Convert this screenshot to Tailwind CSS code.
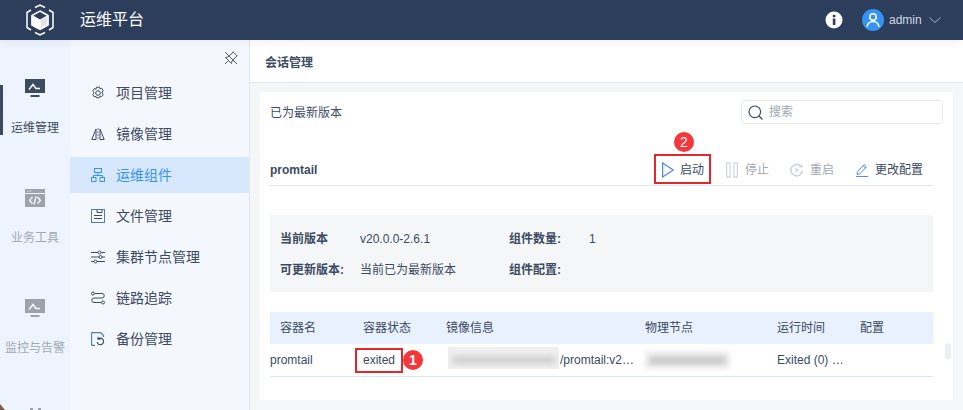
<!doctype html>
<html>
<head>
<meta charset="utf-8">
<script src="https://cdn.jsdelivr.net/npm/@tailwindcss/browser@4"></script>
</head>
<body class="m-0 overflow-hidden">
<div class="relative flex h-[410px] w-[963px] flex-col overflow-hidden bg-[#f5f6f8] font-['Liberation_Sans','Noto_Sans_CJK_SC',sans-serif] text-xs text-[#3c4a62]">
  <header class="relative z-10 flex h-10 shrink-0 items-center bg-[#2c3e5c] text-white shadow-[0_2px_8px_rgba(0,0,0,0.06)]">
    <svg class="ml-[26px] h-[32px] w-[28px]" viewBox="0 0 28 32" fill="none" stroke="#fff"><path d="M9 3.500 14 1l5 2.500M23 6l4 2.500v15L23 26M19 28.500 14 31l-5-2.500M5 26l-4-2.500v-15L5 6" stroke-width="1.500"/><path d="M14 7 22 11.500v9.500L14 25.500 6 21v-9.500Z" stroke-width="1.500"/><path d="M6 11.500 14 16v9.500L6 21Z" fill="#fff" stroke-width="1"/><path d="M14 16 22 11.500v9.500L14 25.500Z" fill="#fff" fill-opacity=".85" stroke-width="1"/></svg>
    <span class="ml-[26px] text-base">运维平台</span>
    <svg class="ml-[681px] h-[18px] w-[18px]" viewBox="0 0 18 18"><circle cx="9" cy="9" r="8.500" fill="#fff"/><rect x="7.800" y="7.500" width="2.600" height="6.500" fill="#2c3e5c"/><rect x="7.800" y="3.800" width="2.600" height="2.400" fill="#2c3e5c"/></svg>
    <svg class="ml-[19px] h-[22px] w-[22px]" viewBox="0 0 22 22" fill="none"><circle cx="11" cy="11" r="11" fill="#3593f5"/><circle cx="11" cy="8" r="3.200" stroke="#fff" stroke-width="1.500"/><path d="M5 18c.5-3.500 3-5.500 6-5.500s5.500 2 6 5.500" stroke="#fff" stroke-width="1.500"/></svg>
    <span class="ml-[5px] text-xs text-[#d3d9e2]">admin</span>
    <svg class="ml-[7px] h-2 w-3" viewBox="0 0 12 8" fill="none" stroke="#a8b2c2"><path d="m.5 1.500 5.500 5 5.500-5"/></svg>
  </header>
  <div class="flex min-h-0 flex-1">
    <nav class="relative flex w-[70px] shrink-0 flex-col items-center gap-[30px] overflow-hidden bg-[#eef4fe] pt-[39px] text-[#a1a8b4]">
      <div class="absolute left-0 top-[45px] h-[50px] w-[3px] bg-[#3c4a62]"></div>
      <a class="flex h-[80px] shrink-0 flex-col items-center text-[#3c4a62]">
        <svg class="h-[20px] w-5" viewBox="0 0 20 20"><rect width="20" height="14" fill="#3c4a62"/><path d="M4 10.500 8 5.500l3 4h4" fill="none" stroke="#fff" stroke-width="1.500"/><rect x="5.500" y="16" width="9" height="2" fill="#3c4a62"/></svg>
        <span class="mt-[21px] whitespace-nowrap">运维管理</span>
      </a>
      <a class="flex h-[80px] shrink-0 flex-col items-center">
        <svg class="h-[18px] w-5" viewBox="0 0 20 18"><rect width="20" height="4" fill="#9ca3af"/><path d="M2 2h5" stroke="#e4e8ef" stroke-dasharray="1 .6"/><rect y="5" width="20" height="13" fill="#9ca3af"/><path d="M7.500 8 4.500 11.500l3 3M12.500 8l3 3.500-3 3M11 7.500l-2 8" fill="none" stroke="#fff" stroke-width="1.300"/></svg>
        <span class="mt-[23px] whitespace-nowrap">业务工具</span>
      </a>
      <a class="flex h-[80px] shrink-0 flex-col items-center">
        <svg class="h-[20px] w-5" viewBox="0 0 20 20"><rect width="20" height="14" fill="#9ca3af"/><path d="M4 10.500 8 5.500l3 4h4" fill="none" stroke="#fff" stroke-width="1.500"/><rect x="5.500" y="16" width="9" height="2" fill="#9ca3af"/></svg>
        <span class="mt-[21px] whitespace-nowrap">监控与告警</span>
      </a>
      <svg class="-mt-[1px] h-[20px] w-[11px] shrink-0" viewBox="0 0 11 20"><rect width="3" height="20" fill="#9ca3af"/><rect x="8" width="3" height="20" fill="#9ca3af"/></svg>
      <svg class="absolute bottom-0 left-0 h-[6px] w-[5px]" viewBox="0 0 5 6"><path d="M0 0 5 6H0Z" fill="#7b5a4e"/></svg>
    </nav>
    <aside class="relative flex w-[180px] shrink-0 flex-col gap-[5px] border-r border-[#e3e7ee] bg-[#f4f7fe] pt-[35px] text-sm">
      <svg class="absolute right-[11px] top-[11px] h-[14px] w-[14px]" viewBox="0 0 14 14" fill="none" stroke="#3c4a62"><path d="M9 .8 13.200 5l-1.500 1L8 10l-.5 2.500L1.500 6.500 4 6l4-3.700ZM4.500 9.500 1 13M1 1l12 12" stroke-width=".9"/></svg>
      <a class="flex h-9 items-center pl-[21px]"><svg class="mr-[11px] h-[14px] w-[14px]" viewBox="0 0 14 14" fill="none" stroke="#3c4a62"><path d="M5.500.7h3l.5 1.700 1.700-.6 1.600 2.500-1.300 1.200v1l1.300 1.200-1.600 2.500-1.700-.6-.5 1.700h-3L5 9.900l-1.700.6L1.700 8l1.300-1.200v-1L1.700 4.600l1.600-2.500 1.700.6Z" transform="translate(0 .5)"/><circle cx="7" cy="7" r="2.300"/></svg>项目管理</a>
      <a class="flex h-9 items-center pl-[21px]"><svg class="mr-[11px] h-[14px] w-[14px]" viewBox="0 0 14 14" fill="none" stroke="#3c4a62"><path d="M5 2 .8 12.500H5ZM9 2l4.200 10.500H9Z"/><path d="M7 1v12.500" stroke="#6f7d95" stroke-dasharray="2 1"/></svg>镜像管理</a>
      <a class="flex h-9 items-center bg-[#d8e8fc] pl-[21px] text-[#3593f5]"><svg class="mr-[11px] h-[14px] w-[14px]" viewBox="0 0 14 14" fill="none" stroke="#3593f5"><rect x="3.500" y=".5" width="7" height="4"/><path d="M7 4.500v3M2.500 9.500v-2h9v2"/><rect x=".5" y="9.500" width="4.500" height="4"/><rect x="9" y="9.500" width="4.500" height="4"/></svg>运维组件</a>
      <a class="flex h-9 items-center pl-[21px]"><svg class="mr-[11px] h-[14px] w-[14px]" viewBox="0 0 14 14" fill="none" stroke="#3c4a62"><rect x=".5" y=".5" width="13" height="13" stroke="#4f7fb5"/><path d="M6 .5v3h5v-3M3 6.500h8M3 9.500h8"/></svg>文件管理</a>
      <a class="flex h-9 items-center pl-[21px]"><svg class="mr-[11px] h-[14px] w-[14px]" viewBox="0 0 14 14" fill="none" stroke="#3c4a62"><path d="M0 2.500h7M10 2.500h4M0 7h8M11 7h3M0 11.500h3M6 11.500h8"/><circle cx="8.500" cy="2.500" r="1.500"/><circle cx="9.500" cy="7" r="1.500"/><circle cx="4.500" cy="11.500" r="1.500"/></svg>集群节点管理</a>
      <a class="flex h-9 items-center pl-[21px]"><svg class="mr-[11px] h-[14px] w-[14px]" viewBox="0 0 14 14" fill="none" stroke="#3c4a62"><circle cx="2" cy="2.500" r="1.500"/><circle cx="12" cy="11.500" r="1.500"/><path d="M4 2.500h7a2.200 2.200 0 0 1 0 4.500H3a2.200 2.200 0 0 0 0 4.500h7"/></svg>链路追踪</a>
      <a class="flex h-9 items-center pl-[21px]"><svg class="mr-[11px] h-[14px] w-[14px]" viewBox="0 0 14 14" fill="none" stroke="#3c4a62"><path d="M.5 1.500a1 1 0 0 1 1-1h8l3 3V5M.5 1.500v10.500a1.500 1.500 0 0 0 1.500 1.500h2" stroke="#4f7fb5" stroke-width="1.300"/><path d="M6 10a3.300 3.300 0 1 0 1-3M7 4.800V7.300h2.500" stroke-width="1.100"/></svg>备份管理</a>
    </aside>
    <div class="relative min-w-0 flex-1">
      <div class="absolute left-1 top-[182px] h-[10px] w-[4px] bg-[radial-gradient(#6f7f9f_45%,transparent_50%)] bg-[length:2px_2px]"></div>
      <div class="flex h-[43px] items-center border-b border-[#e3e6ec] bg-white pl-[15px] pt-[3px] font-bold"><span>会话管理</span></div>
      <main class="mx-[10px] mt-[9px] h-[308px] bg-white pl-[10px] pr-[10px]">
        <div class="flex h-[43px] items-start justify-between pt-2">
          <span class="mt-[5px]">已为最新版本</span>
          <div class="flex h-6 w-[202px] items-center rounded-sm border border-[#e6e8ed] pl-[6px] text-[#a1a8b4]">
            <svg class="mr-[6px] h-[15px] w-[15px]" viewBox="0 0 15 15" fill="none" stroke="#3c4a62" stroke-width="1.200"><circle cx="6.800" cy="6.800" r="5.800"/><path d="m11 11 3.500 3.500"/></svg>搜索
          </div>
        </div>
        <div class="mr-[10px] mt-[16px] flex h-[35px] items-center border-b border-[#e3e6ec] pt-[4px]">
          <span class="font-bold">promtail</span>
          <div class="ml-auto flex items-center pr-[10px]">
            <svg class="mr-[6px] h-4 w-3" viewBox="0 0 12 16" fill="none" stroke="#4a86f0" stroke-width="1.200"><path d="M.6 1v14L11.300 8Z"/></svg><span>启动</span>
            <svg class="ml-[22px] mr-[7px] h-4 w-3" viewBox="0 0 12 16" fill="none" stroke="#cfd3da" stroke-width="1.200"><rect x=".6" y="1" width="3.500" height="14"/><rect x="7.900" y="1" width="3.500" height="14"/></svg><span class="text-[#a1a8b4]">停止</span>
            <svg class="ml-[21px] mr-[7px] h-[14px] w-[13px]" viewBox="0 0 13 14" fill="none" stroke="#cfd3da" stroke-width="1.600"><path d="M11 3.500A5.700 5.700 0 1 0 12.200 8"/><path d="M5.500 4.500v5L9.500 7Z" fill="#cfd3da" stroke="none"/><path d="M12.500 .8V4.500H8.800Z" fill="#cfd3da" stroke="none"/></svg><span class="text-[#a1a8b4]">重启</span>
            <svg class="ml-[22px] mr-[7px] h-[14px] w-3" viewBox="0 0 12 14" fill="none" stroke="#5a8af0"><path d="M1.500 8.500 8 1.500 10.500 3.800 4 10.800 1 11.500ZM7 2.800 9.500 5"/><path d="M0 13.500h12"/></svg><span>更改配置</span>
          </div>
        </div>
        <dl class="mr-[10px] mt-[29px] grid h-[77px] grid-cols-[80px_149px_1fr] content-center gap-y-[15px] bg-[#f5f6f8] pl-[10px] pt-[2px]">
          <div class="col-start-1 font-bold">当前版本</div><div>v20.0.0-2.6.1</div><div class="flex"><span class="w-[80px] font-bold">组件数量:</span><span>1</span></div>
          <div class="col-start-1 font-bold">可更新版本:</div><div>当前已为最新版本</div><div class="font-bold">组件配置:</div>
        </dl>
        <div class="mr-[10px] mt-[20px]">
          <div class="grid h-8 grid-cols-[93px_83px_199px_132px_83px_1fr] items-center bg-[#e8f1fd]">
            <span class="pl-[10px]">容器名</span><span>容器状态</span><span>镜像信息</span><span>物理节点</span><span>运行时间</span><span>配置</span>
          </div>
          <div class="grid h-[33px] grid-cols-[93px_83px_199px_132px_83px_1fr] items-center border-b border-[#d8e8f8]">
            <span>promtail</span><span>exited</span>
            <span class="flex items-center pl-[2px]"><span class="mb-1 flex h-[22px] w-[111px] items-center overflow-hidden bg-[#efefef] pt-1"><i class="mx-1 h-[6px] w-[103px] bg-[#c8c8c8] blur-[3px]"></i></span><span class="ml-[1px]">/promtail:v2…</span></span>
            <span class="flex h-[18px] w-[85px] items-center bg-[#f0f0f0] blur-[2px]"><i class="mx-1 h-[7px] w-[77px] bg-[#c4c4c4] blur-[2px]"></i></span>
            <span>Exited (0) …</span><span></span>
          </div>
        </div>
      </main>
      <div class="absolute right-[12px] top-[303px] h-4 w-[6px] rounded-sm bg-[#eceef1]"></div>
    </div>
  </div>
  <div class="absolute left-[355px] top-[348px] h-[25px] w-[48px] border-2 border-[#e5262b]"></div>
  <div class="absolute left-[403px] top-[350px] flex h-5 w-5 items-center justify-center rounded-full bg-[#f5373c] text-sm font-bold text-white">1</div>
  <div class="absolute left-[654px] top-[154px] h-[30px] w-[57px] border-2 border-[#e5262b]"></div>
  <div class="absolute left-[674px] top-[132px] flex h-5 w-5 items-center justify-center rounded-full bg-[#f5373c] text-sm text-white">2</div>
</div>
</body>
</html>
